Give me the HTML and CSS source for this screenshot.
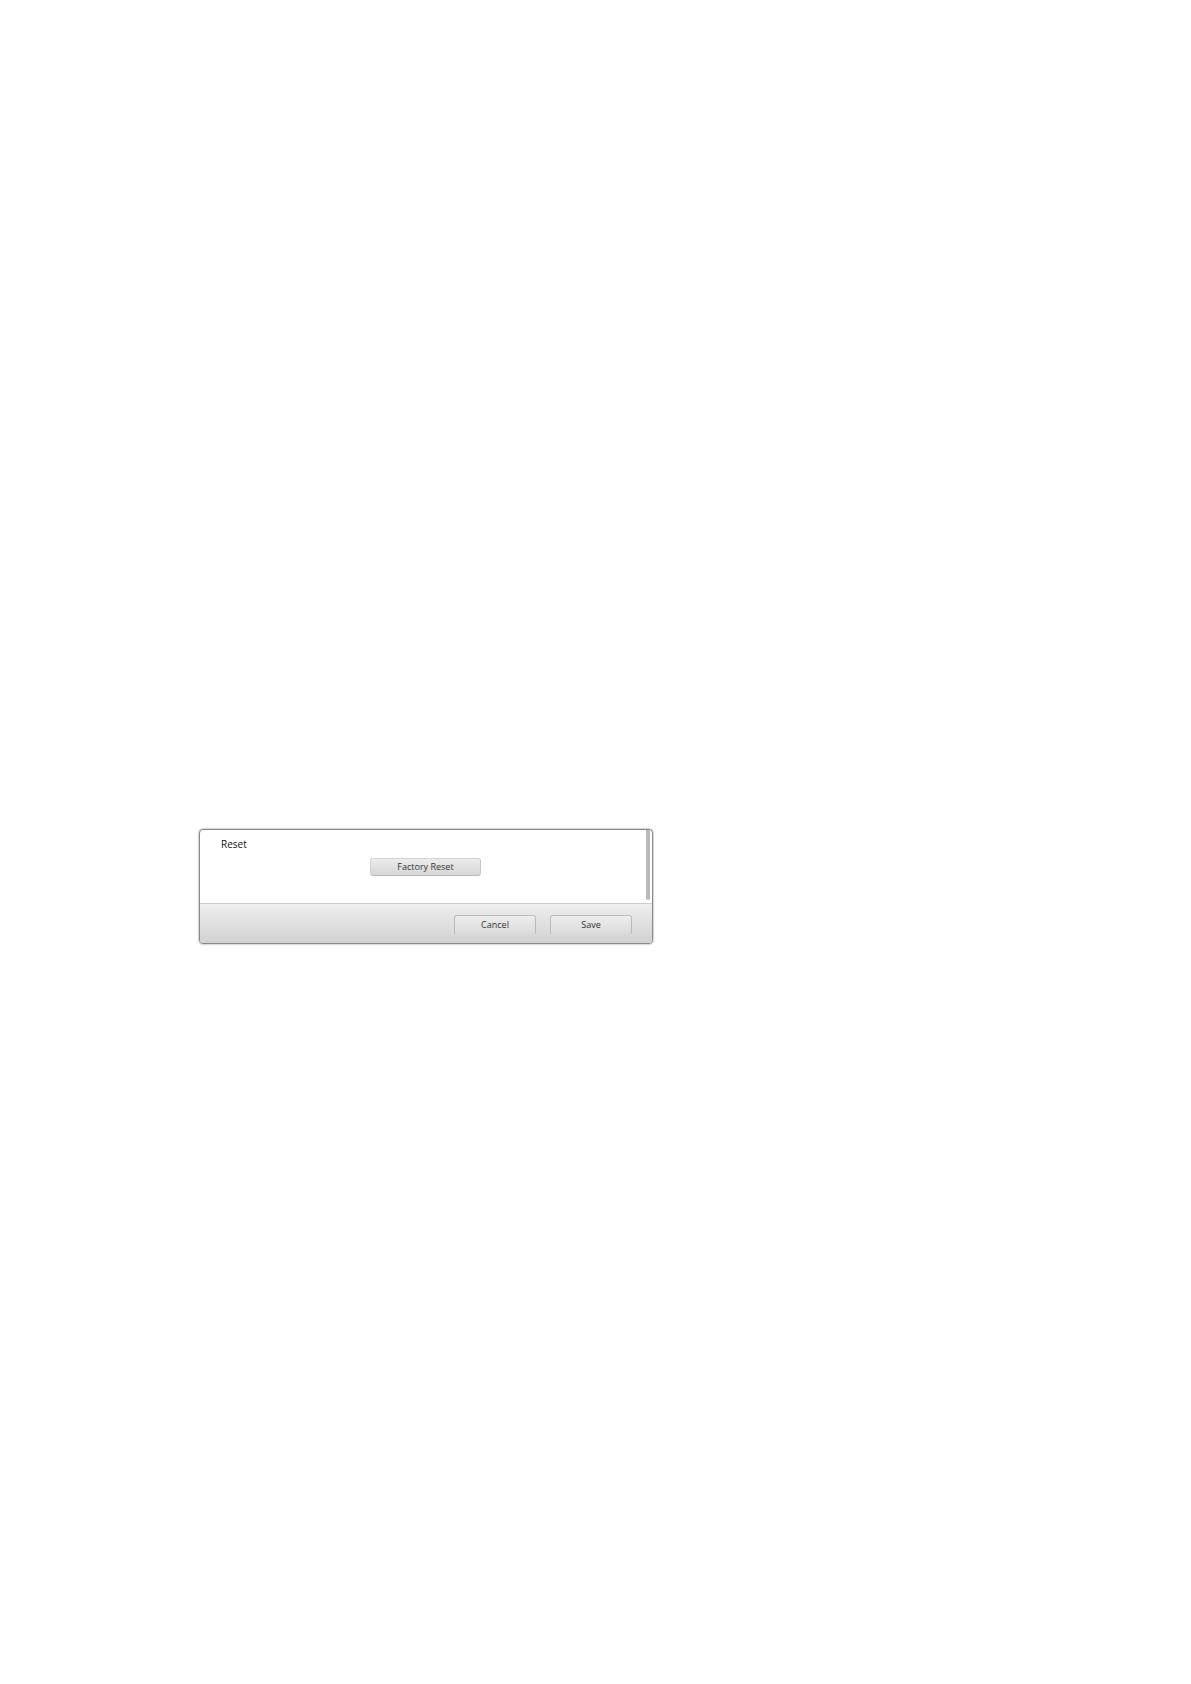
FILE: index.html
```html
<!DOCTYPE html>
<html lang="en">
<head>
  <meta charset="UTF-8">
  <title>Reset</title>
  <link rel="stylesheet" href="styles.css">
</head>
<body>

<form class="dialog">
  <div class="content">
    <section class="settings">
      <h3>Reset</h3>
      <button type="button" class="btn reset-button">Factory Reset</button>
    </section>
    <div class="scrollbar"></div>
  </div>
  <div class="footer">
    <button type="button" class="btn footer-button">Cancel</button>
    <button type="submit" class="btn footer-button">Save</button>
  </div>
</form>

</body>
</html>
```

FILE: styles.css
```css
* {
  box-sizing: border-box;
}

body {
  margin: 0;
  padding: 829px 16px 40px 199px;
  background: #fff;
  font-family: "Open Sans", "Noto Sans", sans-serif;
  font-size: 9px;
  line-height: 12px;
  color: #444;
}

.dialog {
  max-width: 454px;
  border: 1px solid #888;
  border-radius: 4px;
  box-shadow: 0 0 2px #777;
  overflow: hidden;
}

.content {
  display: flex;
  padding-right: 2px;
}

.settings {
  flex: 1;
  padding: 8px 21px 27px;
}

h3 {
  margin: 0 0 8px;
  font-size: 10px;
  font-weight: 500;
  color: #111;
}

.scrollbar {
  width: 4px;
  margin-bottom: 3px;
  border-radius: 0 0 2px 2px;
  background: #b9b9b9;
}

.btn {
  padding: 0;
  border: 1px solid #c4c4c4;
  border-radius: 3px;
  font: inherit;
  color: #333;
  cursor: pointer;
}

.reset-button {
  display: block;
  width: 111px;
  height: 18px;
  margin-left: 149px;
  border-color: #d4d4d4 #c8c8c8 #b8b8b8 #d4d4d4;
  background: linear-gradient(#ececec, #d6d6d6);
}

.footer {
  display: flex;
  justify-content: flex-end;
  gap: 14px;
  padding: 11px 20px 8px;
  border-top: 1px solid #ccc;
  background: linear-gradient(#eee, #d2d2d2);
}

.footer-button {
  width: 82px;
  height: 20px;
  border-color: #bbb #bbb transparent;
  background: linear-gradient(#ededed, #dadada) padding-box;
}
```
